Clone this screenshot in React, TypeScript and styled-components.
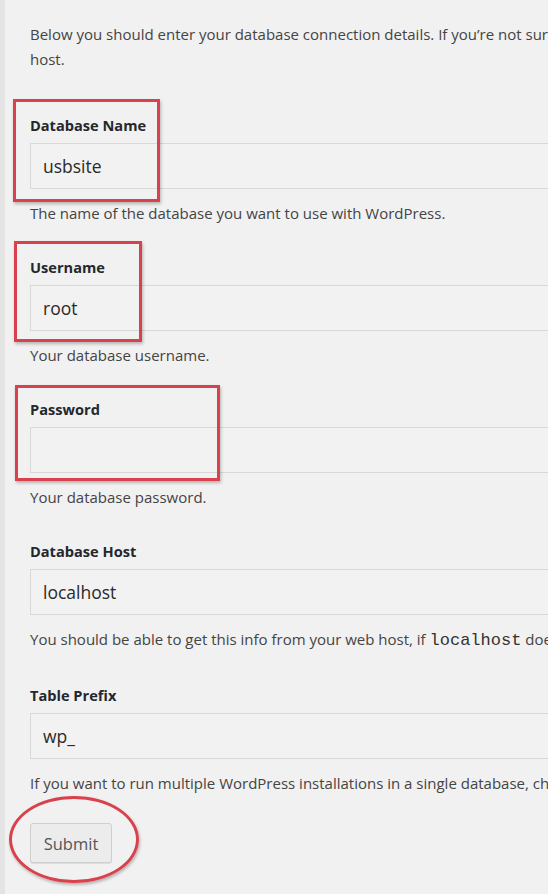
import React from 'react';
import styled, { createGlobalStyle } from 'styled-components';

const Global = createGlobalStyle`
  html,body{margin:0;padding:0;background:#f1f1f1}
  body{font-family:"Open Sans","Noto Sans","Liberation Sans",sans-serif;color:#444;overflow:hidden}
`;

const Page = styled.div`min-height:894px;width:548px;border-left:5px solid #e4e4e4;box-sizing:border-box;padding:22px 0 0 25px;overflow:hidden`;
const Intro = styled.p`margin:0;font-size:15px;line-height:25px;white-space:nowrap;color:#444`;
const Form = styled.div`display:flex;flex-direction:column;margin-top:43px`;
const Field = styled.div`position:relative;display:flex;flex-direction:column;margin-bottom:34px`;
const Label = styled.label`font-size:14.6px;font-weight:700;line-height:20px;color:#23282d`;
const Input = styled.div`margin-top:8px;width:600px;height:46px;box-sizing:border-box;border:1px solid #d8d8d8;background:#f2f2f2;padding:0 12px;display:flex;align-items:center;font-size:17.5px;color:#2a2a2a`;
const Hint = styled.p`margin:14px 0 0;font-size:15px;line-height:20px;white-space:nowrap;color:#444`;
const Code = styled.code`font-family:"Liberation Mono","DejaVu Sans Mono",monospace;font-size:17px;color:#333`;
const Actions = styled.div`position:relative;margin-top:-4px`;
const Button = styled.button`width:82px;height:40px;border:1px solid #cfcfcf;border-radius:3px;background:#ececec;font-family:inherit;font-size:16.5px;color:#555;box-shadow:0 1px 0 #ddd`;
const Mark = styled.div<{ t:number; l:number; w:number; h:number; round?:boolean }>`
  position:absolute;top:${p=>p.t}px;left:${p=>p.l}px;width:${p=>p.w}px;height:${p=>p.h}px;
  box-sizing:border-box;border:3px solid #d9424c;border-radius:${p=>p.round?'50%':'0'};
  box-shadow:1px 2px 3px rgba(0,0,0,.25);pointer-events:none`;

interface F { label:string; value:string; hint:React.ReactNode; mark?:[number,number,number,number] }

const fields: F[] = [
  { label:'Database Name', value:'usbsite', hint:'The name of the database you want to use with WordPress.', mark:[-16,-17,147,103] },
  { label:'Username', value:'root', hint:'Your database username.', mark:[-16,-16,128,101] },
  { label:'Password', value:'', hint:'Your database password.', mark:[-14,-15,205,96] },
  { label:'Database Host', value:'localhost', hint:<>You should be able to get this info from your web host, if <Code>localhost</Code> doesn’t work.</> },
  { label:'Table Prefix', value:'wp_', hint:'If you want to run multiple WordPress installations in a single database, change this.' },
];

export default function App() {
  return (
    <Page>
      <Global />
      <Intro>Below you should enter your database connection details. If you’re not sure about these, contact your<br />host.</Intro>
      <Form>
        {fields.map(f => (
          <Field key={f.label}>
            <Label>{f.label}</Label>
            <Input>{f.value}</Input>
            <Hint>{f.hint}</Hint>
            {f.mark && <Mark t={f.mark[0]} l={f.mark[1]} w={f.mark[2]} h={f.mark[3]} />}
          </Field>
        ))}
        <Actions>
          <Button>Submit</Button>
          <Mark round t={-27} l={-21} w={130} h={87} />
        </Actions>
      </Form>
    </Page>
  );
}
